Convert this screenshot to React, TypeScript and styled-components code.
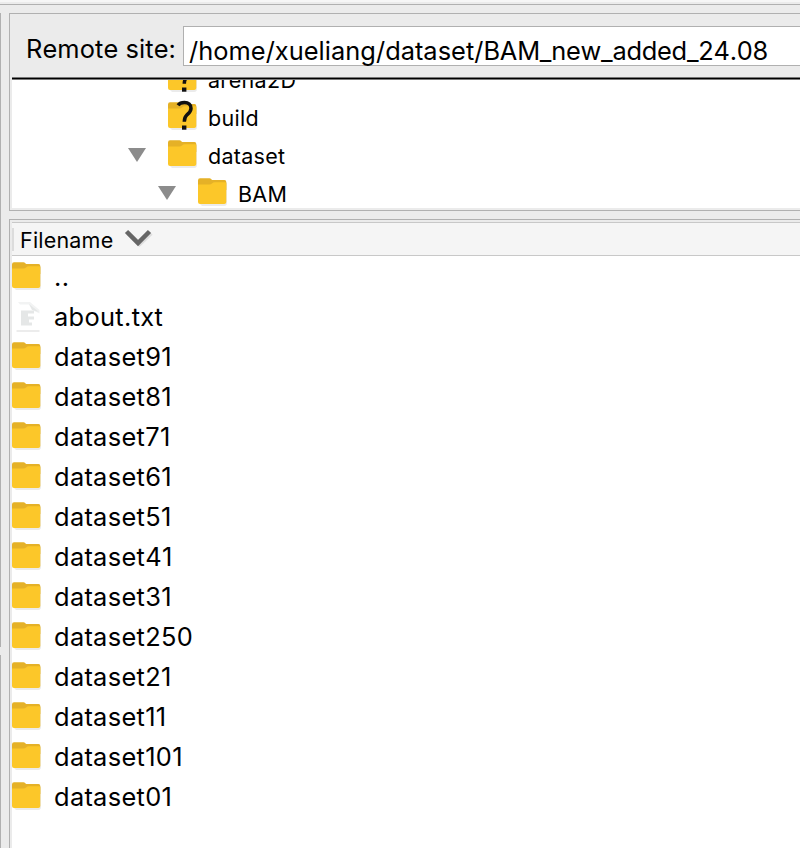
import React from "react";
import styled, { createGlobalStyle } from "styled-components";

const GlobalStyle = createGlobalStyle`
  *, *::before, *::after { box-sizing: border-box; }
  body { margin: 0; background: #ebebeb; overflow: hidden; }
`;

const Window = styled.div`
  display: flex;
  flex-direction: column;
  width: 800px;
  height: 848px;
  overflow: hidden;
  background: #ebebeb;
  color: #000;
  font-family: Inter, "Liberation Sans", sans-serif;
  font-kerning: none;
`;

const TopEdge = styled.div`
  flex: none;
  height: 5px;
  border-top: 2px solid #f6f6f6;
  border-bottom: 1px solid #b0b0b0;
`;

const Body = styled.div`
  display: flex;
  flex: 1;
  min-height: 0;
  padding-top: 8px;
`;

const LeftEdge = styled.div`
  display: flex;
  flex-direction: column;
  gap: 8px;
  width: 9px;
  flex: none;
`;

const Splitter = styled.div<{ $height?: number }>`
  width: 1px;
  background: #b0b0b0;
  ${(p) => (p.$height ? `height: ${p.$height}px;` : "flex: 1;")}
`;

const Column = styled.div`
  display: flex;
  flex: 1;
  min-width: 0;
  flex-direction: column;
  gap: 8px;
`;

const RemotePanel = styled.section`
  display: flex;
  flex: none;
  flex-direction: column;
  height: 198px;
  border: 1px solid #b0b0b0;
  border-right: 0;
  padding: 0 0 2px 2px;
`;

const Toolbar = styled.div`
  display: flex;
  flex: none;
  height: 63px;
  padding: 12px 0 0 14px;
`;

const SiteLabel = styled.label`
  flex: none;
  width: 157px;
  font-size: 25.4px;
  line-height: 46px;
  letter-spacing: 0.1px;
  white-space: nowrap;
`;

const PathField = styled.div`
  flex: 1;
  height: 40px;
  padding-left: 5px;
  border: 1px solid #b0b0b0;
  border-right: 0;
  background: #fff;
  font-size: 25.4px;
  line-height: 47px;
  white-space: nowrap;
  letter-spacing: 0.04px;
`;

const PathLeaf = styled.span`
  letter-spacing: -0.24px;
`;

const Divider = styled.div`
  flex: none;
  height: 3px;
  border: solid #777;
  border-width: 1px 0;
  background: #000;
`;

const Tree = styled.div`
  flex: 1;
  min-height: 0;
  overflow: hidden;
  background: #fff;
`;

const TreeRows = styled.div`
  margin-top: -19px;
`;

const TreeRow = styled.div<{ $depth: number }>`
  display: flex;
  height: 38px;
  padding: 3px 0 0 ${(p) => 116 + p.$depth * 30}px;
`;

const Toggle = styled.svg`
  flex: none;
  width: 18px;
  height: 14px;
  margin: 8px 22px 0 0;
`;

const TreeName = styled.span`
  margin-left: 10px;
  font-size: 21.5px;
  line-height: 33px;
  white-space: nowrap;
  letter-spacing: 0.3px;
`;

const ListPanel = styled.section`
  display: flex;
  flex: 1;
  flex-direction: column;
  min-height: 0;
  border: 1px solid #b0b0b0;
  border-width: 1px 0 0 1px;
  padding: 2px 0 0 2px;
`;

const ListHeader = styled.div`
  display: flex;
  flex: none;
  height: 34px;
  border-top: 1px solid #c8c8c8;
  border-bottom: 1px solid #c8c8c8;
  background: #f5f5f5;
`;

const HeaderMark = styled.div`
  width: 2px;
  height: 23px;
  margin-top: 5px;
  background: #dcdcdc;
`;

const HeaderName = styled.span`
  width: 110px;
  padding-left: 6px;
  font-size: 21.5px;
  line-height: 35px;
  letter-spacing: 0.2px;
`;

const SortIcon = styled.svg`
  width: 30px;
  height: 22px;
  margin-top: 5px;
`;

const FileList = styled.div`
  flex: 1;
  min-height: 0;
  overflow: hidden;
  background: #fff;
`;

const FileRow = styled.div`
  display: flex;
  height: 40px;
  padding-top: 6px;
`;

const FileName = styled.span`
  margin-left: 12px;
  font-size: 25.4px;
  line-height: 29px;
  white-space: nowrap;
  letter-spacing: 0.33px;
`;

const Icon = styled.svg`
  flex: none;
  width: 30px;
  height: 30px;
  overflow: visible;
`;

function FolderIcon({ unknown = false }: { unknown?: boolean }) {
  return (
    <Icon viewBox="0 0 30 30">
      <path d="M2 26h25.500V4.500h1.500V25a3 3 0 0 1-3 3H4z" fill="#ebebeb" />
      <path d="M0 2.500Q0 .3 2 .3h9.500q1 0 1.800.9t2 .9h11.200q1.800 0 1.800 2V12H0z" fill="#e5b127" />
      <path d="M0 6.500h11.500q1.500 0 2.500-1.100T17 4.200H27q1.300 0 1.300 1.300V24q0 2-2 2H2q-2 0-2-2z" fill="#fcc729" />
      {unknown && (
        <g>
          <path d="M10 3.300Q12 .6 16.500.6C20.500.6 23 2.800 23 6.200c0 3.300-2 4.800-4 6.600-2 1.800-2.700 3.200-2.700 7" fill="none" stroke="#111" strokeWidth="3.500" />
          <path d="M14 23.500h4.400v4.200H14z" fill="#111" />
        </g>
      )}
    </Icon>
  );
}

function TextFileIcon() {
  return (
    <Icon viewBox="0 0 30 30">
      <path d="M6 0h12l9.500 8v3.500L22 9l-5-6.500H8z" fill="#f2f3f3" />
      <path d="M17 2l10 8-7-2z" fill="#e5e7e7" />
      <path d="M9 8.500h13v3h-6v3h6v3h-5v3h3v3H9z" fill="#e5e7e7" />
      <path d="M4.500 29h23" stroke="#e6e6e6" strokeWidth="1.500" />
    </Icon>
  );
}

const treeItems = [
  { name: "arena2D", depth: 0, unknown: true, open: false },
  { name: "build", depth: 0, unknown: true, open: false },
  { name: "dataset", depth: 0, unknown: false, open: true },
  { name: "BAM", depth: 1, unknown: false, open: true },
];

const files = [
  "..", "about.txt", "dataset91", "dataset81", "dataset71", "dataset61", "dataset51",
  "dataset41", "dataset31", "dataset250", "dataset21", "dataset11", "dataset101", "dataset01",
];

export default function App() {
  return (
    <>
      <GlobalStyle />
      <Window>
        <TopEdge />
        <Body>
          <LeftEdge>
            <Splitter $height={634} />
            <Splitter />
          </LeftEdge>
          <Column>
            <RemotePanel>
              <Toolbar>
                <SiteLabel>Remote site:</SiteLabel>
                <PathField>
                  /home/xueliang/dataset/<PathLeaf>BAM_new_added_24.08</PathLeaf>
                </PathField>
              </Toolbar>
              <Divider />
              <Tree>
                <TreeRows>
                  {treeItems.map((item) => (
                    <TreeRow key={item.name} $depth={item.depth}>
                      <Toggle viewBox="0 0 18 14">
                        {item.open && <path d="M0 0h18L9 14z" fill="#8c8c8c" />}
                      </Toggle>
                      <FolderIcon unknown={item.unknown} />
                      <TreeName>{item.name}</TreeName>
                    </TreeRow>
                  ))}
                </TreeRows>
              </Tree>
            </RemotePanel>
            <ListPanel>
              <ListHeader>
                <HeaderMark />
                <HeaderName>Filename</HeaderName>
                <SortIcon viewBox="0 0 30 22">
                  <path d="M4 5l11.500 11L27 5" fill="none" stroke="#dedede" strokeWidth="4.500" />
                  <path d="M2.500 3.500L14 15 25.500 3.500" fill="none" stroke="#666" strokeWidth="4.500" />
                </SortIcon>
              </ListHeader>
              <FileList>
                {files.map((name) => (
                  <FileRow key={name}>
                    {name.endsWith(".txt") ? <TextFileIcon /> : <FolderIcon />}
                    <FileName>{name}</FileName>
                  </FileRow>
                ))}
              </FileList>
            </ListPanel>
          </Column>
        </Body>
      </Window>
    </>
  );
}
